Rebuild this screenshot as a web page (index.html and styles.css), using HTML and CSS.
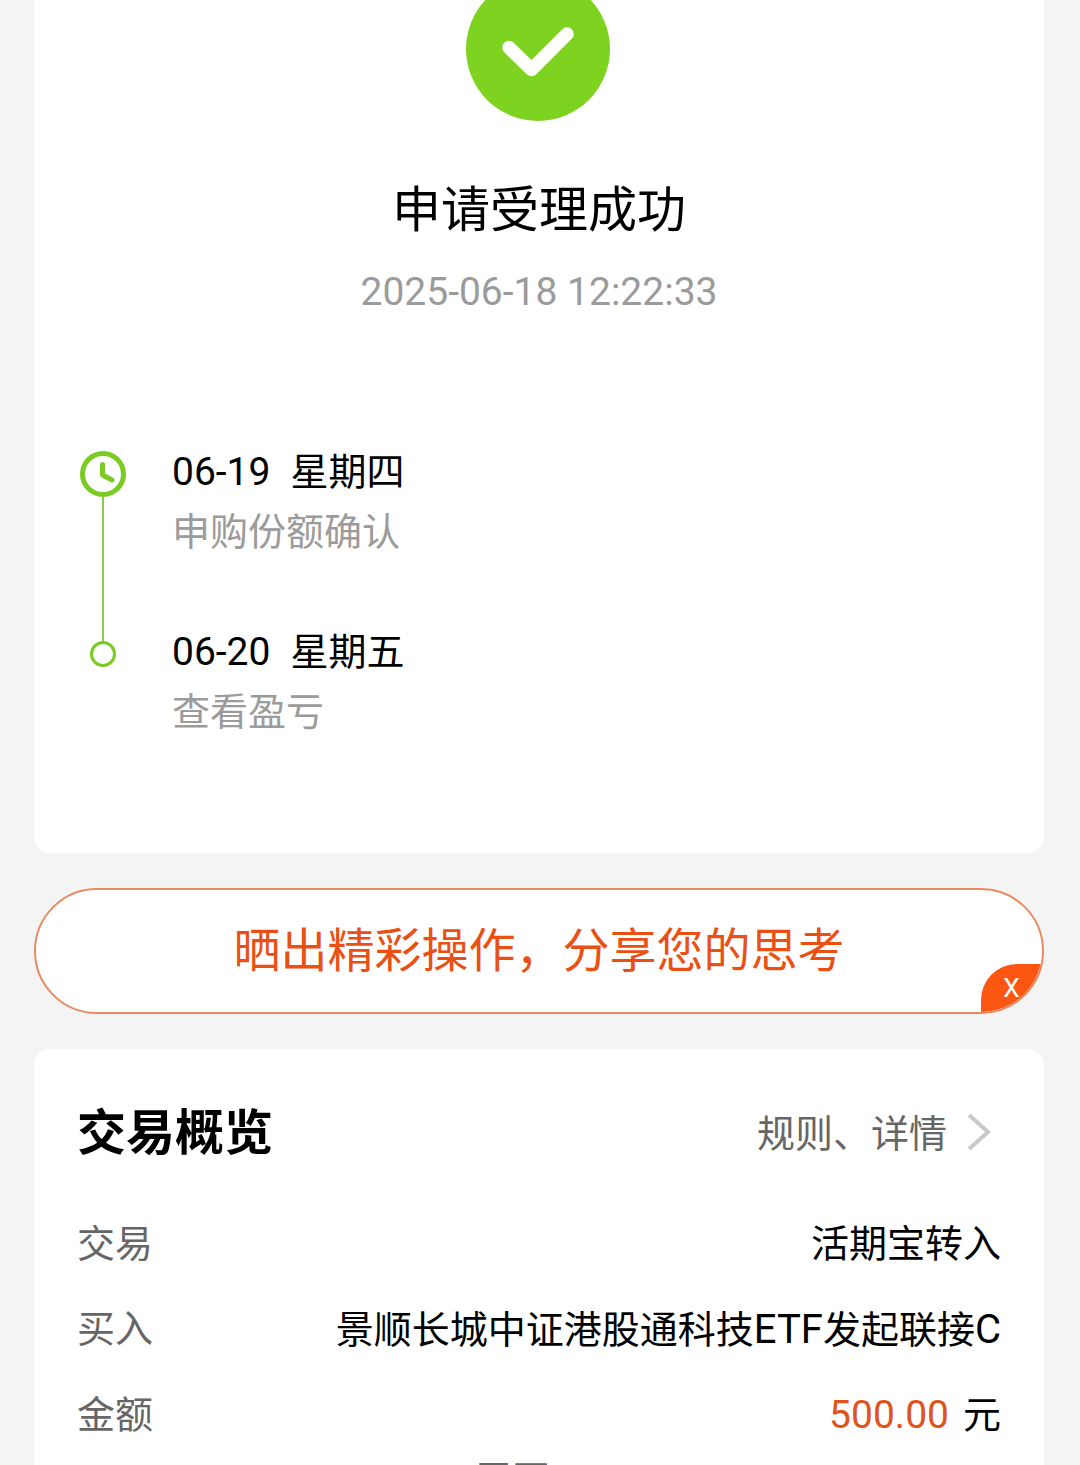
FILE: index.html
```html
<!DOCTYPE html>
<html lang="zh-CN">
<head>
<meta charset="utf-8">
<meta name="viewport" content="width=device-width, initial-scale=1">
<title>申请受理成功</title>
<link rel="stylesheet" href="styles.css">
</head>
<body>
<main class="page">
  <section class="card result">
    <svg class="result-icon" viewBox="0 23 146 121" width="146" height="121" aria-hidden="true">
      <circle cx="72" cy="72" r="72" fill="#7ed321"/>
      <path d="M43 70.500L65.500 92.500L101 57" fill="none" stroke="#fff" stroke-width="13.500" stroke-linecap="round" stroke-linejoin="round"/>
    </svg>
    <h1 class="result-title">申请受理成功</h1>
    <time class="result-time" datetime="2025-06-18T12:22:33">2025-06-18 12:22:33</time>
    <ol class="timeline">
      <li class="step">
        <div class="marker marker-first">
          <svg viewBox="0 0 46 46" width="46" height="46" aria-hidden="true">
            <circle cx="23" cy="23" r="20.500" fill="none" stroke="#7acb22" stroke-width="5"/>
            <path d="M22.500 13.500V24L32 29" fill="none" stroke="#7acb22" stroke-width="5" stroke-linecap="round" stroke-linejoin="round"/>
          </svg>
          <span class="line line-fill"></span>
        </div>
        <div class="step-body">
          <p class="step-date"><span class="num">06-19</span><span>星期四</span></p>
          <p class="step-note">申购份额确认</p>
        </div>
      </li>
      <li class="step">
        <div class="marker">
          <span class="line line-tail"></span>
          <span class="dot"></span>
        </div>
        <div class="step-body">
          <p class="step-date"><span class="num">06-20</span><span>星期五</span></p>
          <p class="step-note">查看盈亏</p>
        </div>
      </li>
    </ol>
  </section>

  <div class="share">
    <a class="share-link" href="#share">晒出精彩操作，分享您的思考</a>
    <button class="share-close" type="button" aria-label="关闭">X</button>
  </div>

  <section class="card overview">
    <header class="overview-head">
      <h2 class="overview-title">交易概览</h2>
      <a class="rules" href="#rules">规则、详情
        <svg viewBox="0 0 24 42" width="24" height="42" aria-hidden="true"><path d="M2 2L21 19L2 36" fill="none" stroke="#c8c8c8" stroke-width="4"/></svg>
      </a>
    </header>
    <dl class="details">
      <div class="row"><dt>交易</dt><dd>活期宝转入</dd></div>
      <div class="row"><dt>买入</dt><dd>景顺长城中证港股通科技<span class="latin">ETF</span>发起联接<span class="latin">C</span></dd></div>
      <div class="row"><dt>金额</dt><dd class="amount"><span class="num price">500.00</span><span>元</span></dd></div>
    </dl>
    <button class="expand" type="button">展开
      <svg viewBox="0 0 38 24" width="38" height="24" aria-hidden="true"><path d="M4 4L19 19L34 4" fill="none" stroke="#c8c8c8" stroke-width="4"/></svg>
    </button>
  </section>
</main>
</body>
</html>
```
FILE: styles.css
```css
* {
  box-sizing: border-box;
}

body {
  margin: 0;
  height: 100vh;
  overflow: hidden;
  background: #f4f4f4;
  color: #000;
  font-family: Roboto, "Noto Sans CJK SC", sans-serif;
  font-size: 38px;
}

h1, h2, p, ol, dl, dd {
  margin: 0;
  padding: 0;
}

a {
  color: inherit;
  text-decoration: none;
}

button {
  border: 0;
  padding: 0;
  font-family: inherit;
  cursor: pointer;
}

svg {
  display: block;
  flex: none;
}

.page {
  display: flex;
  flex-direction: column;
  gap: 35px;
  padding: 0 36px 35px 34px;
}

.card {
  background: #fff;
  border-radius: 16px;
}

.num {
  font-size: 39px;
}

.latin {
  font-size: 40px;
}

/* Result */

.result {
  display: flex;
  flex-direction: column;
  align-items: center;
  padding: 0 46px 111px;
  border-radius: 0 0 16px 16px;
}

.result-title {
  margin-top: 58px;
  font-size: 49px;
  font-weight: 400;
  line-height: 64px;
}

.result-time {
  margin-top: 25px;
  color: #9b9b9b;
  font-size: 39px;
  line-height: 48px;
}

.timeline {
  align-self: stretch;
  margin-top: 126px;
  list-style: none;
}

.step {
  display: flex;
  gap: 46px;
}

.step:not(:last-child) .step-body {
  padding-bottom: 60px;
}

.marker {
  display: flex;
  flex-direction: column;
  align-items: center;
  width: 46px;
}

.marker-first {
  padding-top: 9px;
}

.line {
  width: 2px;
  background: #8bcb50;
}

.line-fill {
  flex: 1;
}

.line-tail {
  height: 19px;
}

.dot {
  width: 26px;
  height: 26px;
  border: 3px solid #7acb22;
  border-radius: 50%;
}

.step-date {
  display: flex;
  align-items: baseline;
  gap: 20px;
  line-height: 60px;
}

.step-note {
  color: #9b9b9b;
  line-height: 60px;
}

/* Share banner */

.share {
  position: relative;
  overflow: hidden;
  border: 2px solid #ea8a62;
  border-radius: 63px;
  background: #fff;
}

.share-link {
  display: block;
  color: #ea5014;
  font-size: 47px;
  line-height: 122px;
  text-align: center;
}

.share-close {
  position: absolute;
  right: 0;
  bottom: 0;
  width: 61px;
  height: 48px;
  border-radius: 36px 0 0 0;
  background: #fc5712;
  color: #fff;
  font-size: 26px;
  line-height: 48px;
}

/* Overview */

.overview {
  padding: 53px 43px 43px;
}

.overview-head {
  display: flex;
  align-items: center;
  justify-content: space-between;
  margin-bottom: 36px;
}

.overview-title {
  font-size: 49px;
  font-weight: 700;
  line-height: 64px;
}

.rules {
  display: flex;
  align-items: center;
  gap: 20px;
  padding-right: 10px;
  color: #666;
  line-height: 64px;
}

.row {
  display: flex;
  justify-content: space-between;
  line-height: 85px;
}

.row dt {
  color: #666;
}

.amount {
  display: flex;
  align-items: baseline;
  gap: 14px;
}

.price {
  color: #e0531c;
}

.expand {
  display: flex;
  align-items: center;
  justify-content: center;
  gap: 16px;
  width: 100%;
  background: none;
  color: #666;
  font-size: 38px;
  line-height: 44px;
}
```
